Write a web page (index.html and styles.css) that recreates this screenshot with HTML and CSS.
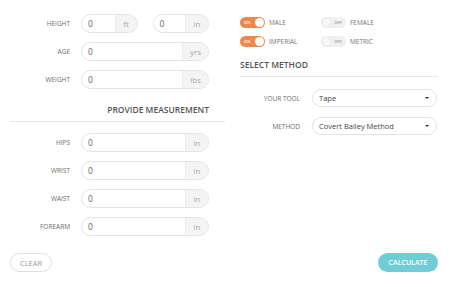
FILE: index.html
```html
<!DOCTYPE html>
<html lang="en">
<head>
  <meta charset="UTF-8">
  <meta name="viewport" content="width=device-width, initial-scale=1.0">
  <title>Body Fat Calculator</title>
  <link rel="stylesheet" href="styles.css">
</head>
<body>

<div class="calc">
  <div class="columns">
    <div class="col-left">
      <div class="row">
        <label class="lbl">Height</label>
        <div class="pair">
          <div class="field"><span class="val">0</span><span class="unit">ft</span></div>
          <div class="field"><span class="val">0</span><span class="unit in">in</span></div>
        </div>
      </div>
      <div class="row">
        <label class="lbl">Age</label>
        <div class="field"><span class="val">0</span><span class="unit wide">yrs</span></div>
      </div>
      <div class="row">
        <label class="lbl">Weight</label>
        <div class="field"><span class="val">0</span><span class="unit wide">lbs</span></div>
      </div>

      <h3 class="section-title right">Provide Measurement</h3>

      <div class="measure">
        <div class="row">
          <label class="lbl">Hips</label>
          <div class="field"><span class="val">0</span><span class="unit in">in</span></div>
        </div>
        <div class="row">
          <label class="lbl">Wrist</label>
          <div class="field"><span class="val">0</span><span class="unit in">in</span></div>
        </div>
        <div class="row">
          <label class="lbl">Waist</label>
          <div class="field"><span class="val">0</span><span class="unit in">in</span></div>
        </div>
        <div class="row">
          <label class="lbl">Forearm</label>
          <div class="field"><span class="val">0</span><span class="unit in">in</span></div>
        </div>
      </div>
    </div>

    <div class="col-right">
      <div class="toggles">
        <div class="toggle-item"><span class="switch on"><span class="sw-text">ON</span><span class="knob"></span></span>Male</div>
        <div class="toggle-item"><span class="switch off"><span class="knob"></span><span class="sw-text">OFF</span></span>Female</div>
        <div class="toggle-item"><span class="switch on"><span class="sw-text">ON</span><span class="knob"></span></span>Imperial</div>
        <div class="toggle-item"><span class="switch off"><span class="knob"></span><span class="sw-text">OFF</span></span>Metric</div>
      </div>

      <h3 class="section-title">Select Method</h3>

      <div class="selects">
        <div class="row">
          <label class="lbl">Your Tool</label>
          <div class="select">Tape<span class="caret"></span></div>
        </div>
        <div class="row">
          <label class="lbl">Method</label>
          <div class="select">Covert Bailey Method<span class="caret"></span></div>
        </div>
      </div>
    </div>
  </div>

  <div class="actions">
    <button class="btn btn-clear" type="button">Clear</button>
    <button class="btn btn-calc" type="button">Calculate</button>
  </div>
</div>

</body>
</html>
```

FILE: styles.css
```css
body {
  margin: 0;
  background: #fff;
  font-family: 'Open Sans', 'Liberation Sans', sans-serif;
  color: #666;
}

.calc {
  padding: 14px 12px 0 10px;
}

.columns {
  display: grid;
  grid-template-columns: 215px 1fr;
  column-gap: 15px;
}

.col-left {
  display: flex;
  flex-direction: column;
}

.row {
  display: grid;
  grid-template-columns: 60px 1fr;
  column-gap: 11px;
  align-items: center;
  height: 19px;
  margin-bottom: 9px;
  padding-right: 16px;
}

.lbl {
  text-align: right;
  font-size: 6.5px;
  text-transform: uppercase;
  color: #6e6e6e;
}

.pair {
  display: grid;
  grid-template-columns: 1fr 1fr;
  column-gap: 15px;
}

.field {
  display: flex;
  height: 19px;
  box-sizing: border-box;
  border: 1px solid #e4e4e4;
  border-radius: 10px;
  overflow: hidden;
}

.val {
  flex: 1;
  padding-left: 6px;
  font-size: 8.5px;
  line-height: 17px;
  color: #666;
}

.unit {
  width: 21px;
  background: #f4f4f4;
  border-left: 1px solid #ececec;
  text-align: center;
  font-size: 8px;
  line-height: 17px;
  color: #aaa;
}

.unit.in {
  width: 22px;
}

.unit.wide {
  width: 25px;
}

.section-title {
  margin: 0;
  font-size: 8.5px;
  font-weight: 600;
  line-height: 12px;
  text-transform: uppercase;
  color: #555;
  padding-bottom: 5px;
  border-bottom: 1px solid #e6e6e6;
}

.col-left .section-title {
  margin-top: 6px;
  margin-bottom: 11px;
}

.section-title.right {
  text-align: right;
  padding-right: 16px;
}

/* toggles */
.toggles {
  display: grid;
  grid-template-columns: 81px 1fr;
  row-gap: 7px;
  padding-top: 2px;
  margin-bottom: 12px;
}

.toggle-item {
  display: flex;
  align-items: center;
  gap: 4px;
  font-size: 6.5px;
  text-transform: uppercase;
  color: #777;
  height: 12px;
}

.switch {
  position: relative;
  display: flex;
  align-items: center;
  width: 25px;
  height: 11px;
  border-radius: 6px;
  box-sizing: border-box;
}

.switch.on {
  background: #f0874c;
  justify-content: space-between;
  padding: 0 1px 0 4px;
}

.switch.off {
  background: #f0f0f0;
  justify-content: space-between;
  padding: 0 4px 0 1px;
}

.sw-text {
  font-size: 4px;
  font-weight: 600;
}

.switch.on .sw-text {
  color: #fff;
}

.switch.off .sw-text {
  color: #999;
}

.knob {
  width: 9px;
  height: 9px;
  border-radius: 50%;
  background: #fff;
}

.switch.off .knob {
  background: #f7f7f7;
  box-shadow: 0 0 1px rgba(0,0,0,0.2);
}

.col-right .section-title {
  margin-bottom: 12px;
}

.selects .row {
  height: 18px;
  column-gap: 12px;
  margin-bottom: 10px;
  padding-right: 1px;
}

.select {
  position: relative;
  height: 18px;
  box-sizing: border-box;
  border: 1px solid #e4e4e4;
  border-radius: 9px;
  padding-left: 6px;
  font-size: 7.5px;
  line-height: 16px;
  color: #444;
}

.caret {
  position: absolute;
  right: 7px;
  top: 7px;
  border-left: 2px solid transparent;
  border-right: 2px solid transparent;
  border-top: 2.5px solid #333;
}

/* buttons */
.actions {
  display: flex;
  justify-content: space-between;
  margin-top: 8px;
}

.btn {
  height: 19px;
  border-radius: 10px;
  font-family: 'Open Sans', 'Liberation Sans', sans-serif;
  font-size: 7.5px;
  text-transform: uppercase;
  cursor: pointer;
}

.btn-clear {
  width: 42px;
  background: #fff;
  border: 1px solid #e0e0e0;
  color: #999;
}

.btn-calc {
  width: 60px;
  background: #72ccd5;
  border: none;
  color: #fff;
  font-weight: 600;
  font-size: 7px;
}
```
